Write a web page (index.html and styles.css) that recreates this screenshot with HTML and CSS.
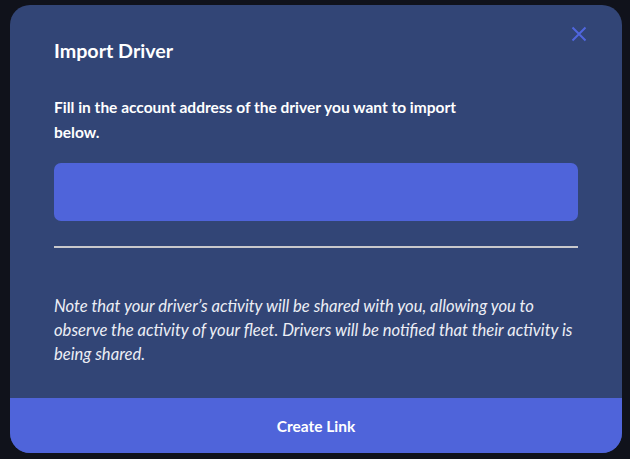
FILE: index.html
```html
<!DOCTYPE html>
<html lang="en">
<head>
<meta charset="utf-8">
<title>Import Driver</title>
<link rel="stylesheet" href="styles.css">
</head>
<body>
<div class="modal">
  <button class="close" aria-label="Close">
    <svg width="16" height="16" viewBox="0 0 16 16"><path d="M1.5 1.5 L14.5 14.5 M14.5 1.5 L1.5 14.5" stroke="#5066de" stroke-width="2" fill="none"/></svg>
  </button>
  <div class="content">
    <h2 class="title">Import Driver</h2>
    <p class="lead">Fill in the account address of the driver you want to import below.</p>
    <input class="field" type="text" aria-label="Account address">
    <div class="rule"></div>
    <p class="note">Note that your driver’s activity will be shared with you, allowing you to observe the activity of your fleet. Drivers will be notified that their activity is being shared.</p>
  </div>
  <button class="action">Create Link</button>
</div>
</body>
</html>
```

FILE: styles.css
```css
html, body {
  margin: 0;
  padding: 0;
  background: #10121b;
  height: 100%;
}
body {
  font-family: Lato, "Open Sans", sans-serif;
  color: #ffffff;
}
.modal {
  position: relative;
  margin: 5px 0 0 10px;
  width: 612px;
  height: 448px;
  background: #324576;
  border-radius: 20px;
  overflow: hidden;
  display: flex;
  flex-direction: column;
}
.close {
  position: absolute;
  top: 21px;
  right: 35px;
  background: none;
  border: 0;
  padding: 0;
  width: 16px;
  height: 16px;
  cursor: pointer;
}
.close svg { display: block; }
.content {
  flex: 1;
  padding: 34px 44px 0 44px;
  display: flex;
  flex-direction: column;
}
.title {
  margin: 0;
  font-size: 19.7px;
  font-weight: 700;
  line-height: 24px;
}
.lead {
  margin: 32px 0 0 0;
  max-width: 420px;
  font-size: 15.5px;
  font-weight: 700;
  line-height: 25px;
}
.field {
  margin: 18px 0 0 0;
  height: 58px;
  border: 0;
  border-radius: 7px;
  background: #4f64da;
  padding: 0 16px;
  box-sizing: border-box;
  width: 100%;
}
.rule {
  margin-top: 25px;
  height: 2px;
  background: #c9c9cc;
}
.note {
  margin: 46px 0 0 0;
  font-size: 16.6px;
  font-style: italic;
  line-height: 24px;
  color: #eceef5;
}
.action {
  height: 55px;
  border: 0;
  background: #4f64da;
  color: #ffffff;
  font-family: Lato, "Open Sans", sans-serif;
  font-size: 15.5px;
  font-weight: 700;
  cursor: pointer;
  padding: 0;
}
```
